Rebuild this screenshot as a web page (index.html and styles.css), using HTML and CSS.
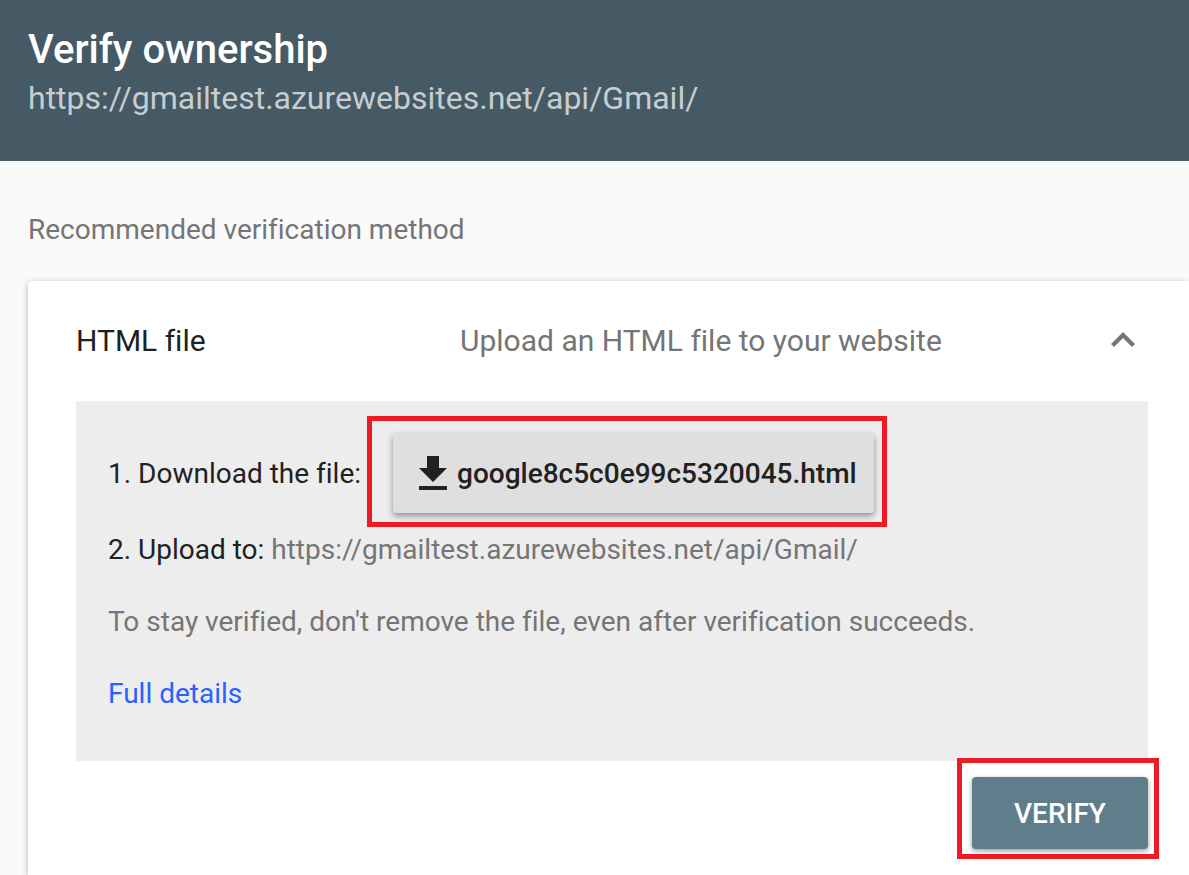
FILE: index.html
```html
<!DOCTYPE html>
<html lang="en">
<head>
<meta charset="utf-8">
<title>Verify ownership</title>
<link rel="stylesheet" href="styles.css">
</head>
<body>
<header class="banner">
  <h1 class="title">Verify ownership</h1>
  <p class="site">https://gmailtest.azurewebsites.net/api/Gmail/</p>
</header>
<main class="content">
  <h2 class="section-label">Recommended verification method</h2>
  <section class="card">
    <div class="card-head">
      <h3 class="method">HTML file</h3>
      <p class="summary">Upload an HTML file to your website</p>
      <button class="toggle" type="button" aria-label="Collapse" aria-expanded="true">
        <svg viewBox="0 0 24 20" width="24" height="20" aria-hidden="true"><path d="M12 1 24 13l-3 3-9-9-9 9-3-3z" fill="#757575"/></svg>
      </button>
    </div>
    <div class="panel">
      <div class="step step-download">
        <span class="step-text">1. Download the file:</span>
        <div class="highlight highlight-download">
          <button class="download" type="button">
            <svg viewBox="0 0 28 34" width="28" height="34" aria-hidden="true"><path d="M8 0h12v12h8L14 26 0 12h8zM0 30h28v4H0z" fill="#212121"/></svg>
            <span class="file-name">google8c5c0e99c5320045.html</span>
          </button>
        </div>
      </div>
      <p class="step">2. Upload to: <span class="muted">https://gmailtest.azurewebsites.net/api/Gmail/</span></p>
      <p class="step muted">To stay verified, don't remove the file, even after verification succeeds.</p>
      <p class="step"><a class="details" href="#">Full details</a></p>
    </div>
    <div class="actions">
      <div class="highlight highlight-verify">
        <button class="verify" type="button">VERIFY</button>
      </div>
    </div>
  </section>
</main>
</body>
</html>
```
FILE: styles.css
```css
* { box-sizing: border-box; }
body {
  margin: 0;
  min-height: 100vh;
  display: flex;
  flex-direction: column;
  background: #fafafa;
  color: #212121;
  font-family: Roboto, "Liberation Sans", sans-serif;
  font-size: 28px;
  line-height: 40px;
  font-variant-ligatures: none;
}
h1, h2, h3, p { margin: 0; font-weight: 400; }
button { font: inherit; color: inherit; border: 0; cursor: pointer; }
svg { display: block; flex: none; }
.banner {
  padding: 25px 28px 40px;
  background: #455a64;
}
.title { font-size: 40px; line-height: 50px; font-weight: 500; color: #fff; }
.site { font-size: 32px; line-height: 46px; color: #c7cdd0; overflow-wrap: anywhere; }
.content {
  flex: 1;
  display: flex;
  flex-direction: column;
  padding: 49px 0 0 28px;
}
.section-label { font-size: 28px; line-height: 40px; color: #757575; }
.card {
  flex: 1;
  margin-top: 31px;
  padding: 0 41px 16px 48px;
  border-radius: 4px 0 0 0;
  background: #fff;
  box-shadow: 0 2px 6px rgba(0, 0, 0, 0.3);
}
.card-head {
  display: grid;
  grid-template-columns: 384px 1fr auto;
  align-items: center;
  padding: 39px 0;
  font-size: 30px;
  line-height: 42px;
}
.method { font-size: 30px; }
.summary { color: #757575; }
.toggle { padding: 10px 13px 10px 12px; background: none; }
.panel {
  display: flex;
  flex-direction: column;
  gap: 32px;
  padding: 15px 32px 47px;
  background: #ededed;
}
.step-download {
  display: flex;
  align-items: center;
  gap: 6px;
  margin-bottom: -29px;
}
.step-text { padding-top: 4px; }
.highlight { border: 5px solid #ed1c24; }
.highlight-download { padding: 12px 8px 9px 21px; }
.download {
  display: flex;
  align-items: center;
  gap: 10px;
  height: 80px;
  padding: 0 17px 0 26px;
  border-radius: 4px;
  background: #dfdfdf;
  font-weight: 500;
  box-shadow: 0 3px 6px rgba(0, 0, 0, 0.4);
}
.file-name { padding-top: 2px; }
.muted { color: #757575; }
.details { color: #2962ff; text-decoration: none; }
.actions {
  display: flex;
  justify-content: flex-end;
  margin: -3px -11px 0 0;
}
.highlight-verify { padding: 14px 6px 5px 10px; }
.verify {
  display: block;
  min-width: 176px;
  height: 72px;
  padding: 2px 16px 0;
  border-radius: 4px;
  background: #607d8b;
  color: #fff;
  font-weight: 500;
  box-shadow: 0 2px 5px rgba(0, 0, 0, 0.4);
}
```
